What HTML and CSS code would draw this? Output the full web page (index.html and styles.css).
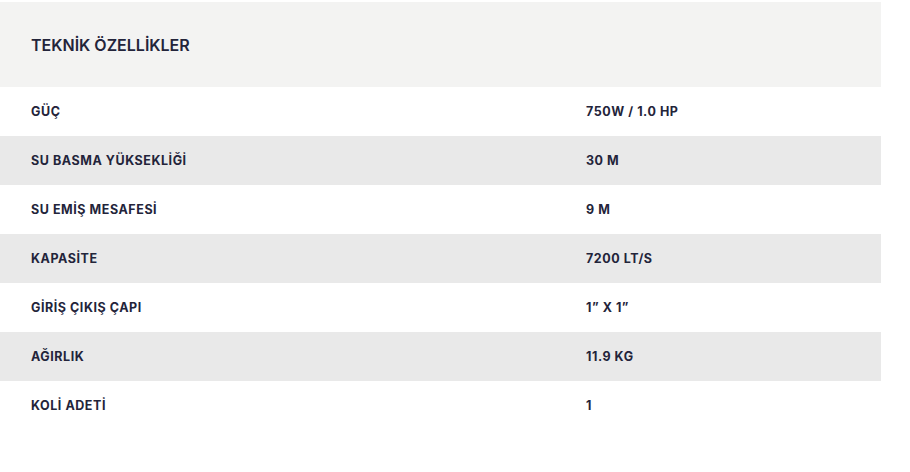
FILE: index.html
```html
<!DOCTYPE html>
<html lang="tr">
<head>
<meta charset="utf-8">
<link rel="stylesheet" href="styles.css">
</head>
<body>
<div class="specs">
  <div class="specs-head">TEKNİK ÖZELLİKLER</div>
  <div class="row"><span class="label">GÜÇ</span><span class="value">750W / 1.0 HP</span></div>
  <div class="row alt"><span class="label">SU BASMA YÜKSEKLİĞİ</span><span class="value">30 M</span></div>
  <div class="row"><span class="label">SU EMİŞ MESAFESİ</span><span class="value">9 M</span></div>
  <div class="row alt"><span class="label">KAPASİTE</span><span class="value">7200 LT/S</span></div>
  <div class="row"><span class="label">GİRİŞ ÇIKIŞ ÇAPI</span><span class="value">1” X 1”</span></div>
  <div class="row alt"><span class="label">AĞIRLIK</span><span class="value">11.9 KG</span></div>
  <div class="row"><span class="label">KOLİ ADETİ</span><span class="value">1</span></div>
</div>
</body>
</html>
```
FILE: styles.css
```css
html, body {
  margin: 0;
  padding: 0;
  background: #ffffff;
}
body {
  font-family: Inter, "Open Sans", "Liberation Sans", sans-serif;
  color: #23243a;
}
.specs {
  width: 881px;
  margin-top: 2px;
}
.specs-head {
  height: 85px;
  background: #f3f3f2;
  display: flex;
  align-items: center;
  padding-left: 31px;
  font-size: 16px;
  font-weight: 600;
  letter-spacing: 0;
}
.row {
  height: 49px;
  display: grid;
  grid-template-columns: 555px 1fr;
  align-items: center;
  padding-left: 31px;
  font-size: 12.5px;
  font-weight: 700;
  letter-spacing: 0.55px;
}
.row.alt {
  background: #e9e9e9;
}
```
